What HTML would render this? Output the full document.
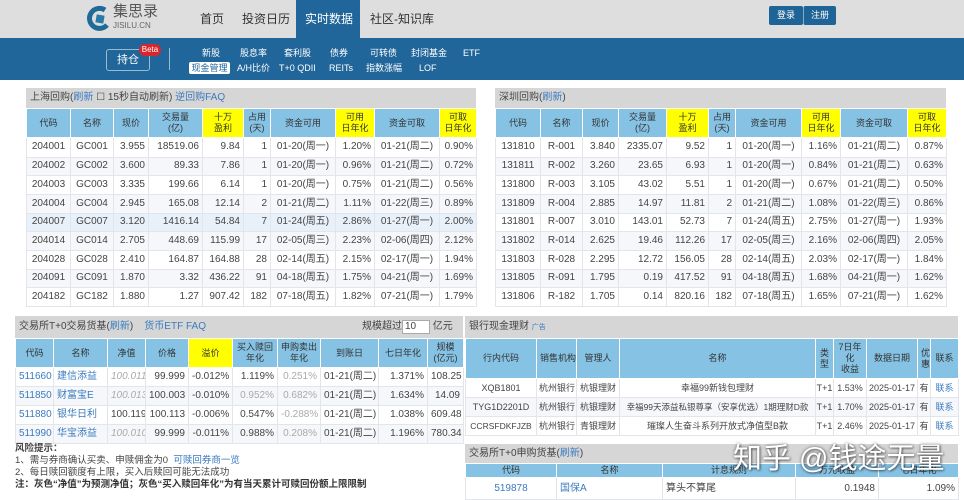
<!DOCTYPE html>
<html><head><meta charset="utf-8">
<style>
*{margin:0;padding:0;box-sizing:border-box}
body{width:964px;height:500px;overflow:hidden;background:#fff;font-family:"Liberation Sans","Noto Sans CJK SC",sans-serif;color:#333;position:relative}
.abs{position:absolute;white-space:nowrap}
table{border-collapse:collapse;table-layout:fixed;position:absolute}
td,th{border:1px solid #e2e6ea;font-size:10px;font-weight:normal;overflow:hidden;white-space:nowrap;padding:0 3px;line-height:12px;vertical-align:middle}
th{background:#86c2e4;color:#333;text-align:center;border-color:#fff;line-height:11px;font-size:9px}
th.y{background:#ffff00}
td{text-align:right;color:#444}
td.c{text-align:center}
td.l{text-align:left}
tr:nth-child(odd) td{background:#f6f7fa}
.hl td{background:#e8f1fa!important}
.title{background:#d6d6d6;font-size:10px;color:#444;padding-left:4px}
.lk{color:#3a7bbf}
.gr{color:#aaa;font-style:italic}
.g2{color:#aaa}
.nav{color:#fff;font-size:9px;line-height:11px}
.bk td{font-size:9px;padding:0 2px}
</style></head><body>
<div class="abs" style="left:0;top:0;width:964px;height:38px;background:#dedede"></div>
<div class="abs" style="left:0;top:38px;width:964px;height:42px;background:#20669a"></div>
<div class="abs" style="left:296px;top:0;width:64px;height:38px;background:#20669a"></div>
<svg class="abs" style="left:87px;top:5px" width="24" height="26" viewBox="0 0 24 26"><path d="M18 5 A10 10 0 1 0 20 20" fill="none" stroke="#1f6a96" stroke-width="5"/><rect x="9" y="10" width="8" height="8" fill="#2a7aa8" transform="rotate(10 13 14)"/></svg>
<div class="abs" style="left:113px;top:3px;font-size:15px;line-height:18px;color:#555">集思录</div>
<div class="abs" style="left:113px;top:21px;font-size:8px;line-height:9px;color:#666">JISILU.CN</div>
<div class="abs" style="left:200px;top:11px;font-size:12px;line-height:16px;color:#333">首页</div>
<div class="abs" style="left:242px;top:11px;font-size:12px;line-height:16px;color:#333">投资日历</div>
<div class="abs" style="left:305px;top:11px;font-size:12px;line-height:16px;color:#fff">实时数据</div>
<div class="abs" style="left:370px;top:11px;font-size:12px;line-height:16px;color:#333">社区-知识库</div>
<div class="abs" style="left:769px;top:6px;width:34px;height:19px;background:#1f6496;border-radius:2px;color:#fff;font-size:9px;text-align:center;line-height:19px">登录</div>
<div class="abs" style="left:803px;top:6px;width:33px;height:19px;background:#1f6496;border-left:1px solid #8ab;border-radius:2px;color:#fff;font-size:9px;text-align:center;line-height:19px">注册</div>
<div class="abs" style="left:106px;top:49px;width:44px;height:22px;border:1px solid #9bc;border-radius:3px;color:#fff;font-size:11px;text-align:center;line-height:20px">持仓</div>
<div class="abs" style="left:139px;top:44px;width:22px;height:12px;background:#d9262b;border-radius:6px;color:#fff;font-size:8px;text-align:center;line-height:12px">Beta</div>
<div class="abs" style="left:169px;top:48px;width:1px;height:22px;background:#9bc"></div>
<div class="abs nav" style="left:202px;top:48px">新股</div>
<div class="abs nav" style="left:240px;top:48px">股息率</div>
<div class="abs nav" style="left:284px;top:48px">套利股</div>
<div class="abs nav" style="left:330px;top:48px">债券</div>
<div class="abs nav" style="left:370px;top:48px">可转债</div>
<div class="abs nav" style="left:411px;top:48px">封闭基金</div>
<div class="abs nav" style="left:463px;top:48px">ETF</div>
<div class="abs" style="left:189px;top:62px;width:41px;height:12px;background:#fff;color:#20669a;font-size:9px;text-align:center;line-height:12px;border-radius:2px">现金管理</div>
<div class="abs nav" style="left:237px;top:63px">A/H比价</div>
<div class="abs nav" style="left:279px;top:63px">T+0 QDII</div>
<div class="abs nav" style="left:329px;top:63px">REITs</div>
<div class="abs nav" style="left:366px;top:63px">指数涨幅</div>
<div class="abs nav" style="left:419px;top:63px">LOF</div>

<div class="abs title" style="left:26px;top:88px;width:450px;height:20px;line-height:20px">上海回购(<span class="lk">刷新</span> ☐ 15秒自动刷新) <span class="lk">逆回购FAQ</span></div>
<table style="left:26px;top:108px;width:450px">
<colgroup><col style="width:44px"><col style="width:43px"><col style="width:35px"><col style="width:54px"><col style="width:41px"><col style="width:27px"><col style="width:65px"><col style="width:39px"><col style="width:65px"><col style="width:37px"></colgroup>
<tr style="height:29px"><th>代码</th><th>名称</th><th>现价</th><th>交易量<br>(亿)</th><th class="y">十万<br>盈利</th><th>占用<br>(天)</th><th>资金可用</th><th class="y">可用<br>日年化</th><th>资金可取</th><th class="y">可取<br>日年化</th></tr>
<tr style="height:19.5px"><td class="c">204001</td><td class="c">GC001</td><td>3.955</td><td>18519.06</td><td>9.84</td><td>1</td><td class="c">01-20(周一)</td><td>1.20%</td><td class="c">01-21(周二)</td><td>0.90%</td></tr>
<tr style="height:18.7px"><td class="c">204002</td><td class="c">GC002</td><td>3.600</td><td>89.33</td><td>7.86</td><td>1</td><td class="c">01-20(周一)</td><td>0.96%</td><td class="c">01-21(周二)</td><td>0.72%</td></tr>
<tr style="height:18.7px"><td class="c">204003</td><td class="c">GC003</td><td>3.335</td><td>199.66</td><td>6.14</td><td>1</td><td class="c">01-20(周一)</td><td>0.75%</td><td class="c">01-21(周二)</td><td>0.56%</td></tr>
<tr style="height:18.7px"><td class="c">204004</td><td class="c">GC004</td><td>2.945</td><td>165.08</td><td>12.14</td><td>2</td><td class="c">01-21(周二)</td><td>1.11%</td><td class="c">01-22(周三)</td><td>0.89%</td></tr>
<tr class="hl" style="height:18.7px"><td class="c">204007</td><td class="c">GC007</td><td>3.120</td><td>1416.14</td><td>54.84</td><td>7</td><td class="c">01-24(周五)</td><td>2.86%</td><td class="c">01-27(周一)</td><td>2.00%</td></tr>
<tr style="height:18.7px"><td class="c">204014</td><td class="c">GC014</td><td>2.705</td><td>448.69</td><td>115.99</td><td>17</td><td class="c">02-05(周三)</td><td>2.23%</td><td class="c">02-06(周四)</td><td>2.12%</td></tr>
<tr style="height:18.7px"><td class="c">204028</td><td class="c">GC028</td><td>2.410</td><td>164.87</td><td>164.88</td><td>28</td><td class="c">02-14(周五)</td><td>2.15%</td><td class="c">02-17(周一)</td><td>1.94%</td></tr>
<tr style="height:18.7px"><td class="c">204091</td><td class="c">GC091</td><td>1.870</td><td>3.32</td><td>436.22</td><td>91</td><td class="c">04-18(周五)</td><td>1.75%</td><td class="c">04-21(周一)</td><td>1.69%</td></tr>
<tr style="height:18.7px"><td class="c">204182</td><td class="c">GC182</td><td>1.880</td><td>1.27</td><td>907.42</td><td>182</td><td class="c">07-18(周五)</td><td>1.82%</td><td class="c">07-21(周一)</td><td>1.79%</td></tr>
</table>

<div class="abs title" style="left:495px;top:88px;width:451px;height:20px;line-height:20px">深圳回购(<span class="lk">刷新</span>)</div>
<table style="left:495px;top:108px;width:451px">
<colgroup><col style="width:45px"><col style="width:42px"><col style="width:36px"><col style="width:48px"><col style="width:42px"><col style="width:27px"><col style="width:66px"><col style="width:39px"><col style="width:67px"><col style="width:39px"></colgroup>
<tr style="height:29px"><th>代码</th><th>名称</th><th>现价</th><th>交易量<br>(亿)</th><th class="y">十万<br>盈利</th><th>占用<br>(天)</th><th>资金可用</th><th class="y">可用<br>日年化</th><th>资金可取</th><th class="y">可取<br>日年化</th></tr>
<tr style="height:19.5px"><td class="c">131810</td><td class="c">R-001</td><td>3.840</td><td>2335.07</td><td>9.52</td><td>1</td><td class="c">01-20(周一)</td><td>1.16%</td><td class="c">01-21(周二)</td><td>0.87%</td></tr>
<tr style="height:18.7px"><td class="c">131811</td><td class="c">R-002</td><td>3.260</td><td>23.65</td><td>6.93</td><td>1</td><td class="c">01-20(周一)</td><td>0.84%</td><td class="c">01-21(周二)</td><td>0.63%</td></tr>
<tr style="height:18.7px"><td class="c">131800</td><td class="c">R-003</td><td>3.105</td><td>43.02</td><td>5.51</td><td>1</td><td class="c">01-20(周一)</td><td>0.67%</td><td class="c">01-21(周二)</td><td>0.50%</td></tr>
<tr style="height:18.7px"><td class="c">131809</td><td class="c">R-004</td><td>2.885</td><td>14.97</td><td>11.81</td><td>2</td><td class="c">01-21(周二)</td><td>1.08%</td><td class="c">01-22(周三)</td><td>0.86%</td></tr>
<tr style="height:18.7px"><td class="c">131801</td><td class="c">R-007</td><td>3.010</td><td>143.01</td><td>52.73</td><td>7</td><td class="c">01-24(周五)</td><td>2.75%</td><td class="c">01-27(周一)</td><td>1.93%</td></tr>
<tr style="height:18.7px"><td class="c">131802</td><td class="c">R-014</td><td>2.625</td><td>19.46</td><td>112.26</td><td>17</td><td class="c">02-05(周三)</td><td>2.16%</td><td class="c">02-06(周四)</td><td>2.05%</td></tr>
<tr style="height:18.7px"><td class="c">131803</td><td class="c">R-028</td><td>2.295</td><td>12.72</td><td>156.05</td><td>28</td><td class="c">02-14(周五)</td><td>2.03%</td><td class="c">02-17(周一)</td><td>1.84%</td></tr>
<tr style="height:18.7px"><td class="c">131805</td><td class="c">R-091</td><td>1.795</td><td>0.19</td><td>417.52</td><td>91</td><td class="c">04-18(周五)</td><td>1.68%</td><td class="c">04-21(周一)</td><td>1.62%</td></tr>
<tr style="height:18.7px"><td class="c">131806</td><td class="c">R-182</td><td>1.705</td><td>0.14</td><td>820.16</td><td>182</td><td class="c">07-18(周五)</td><td>1.65%</td><td class="c">07-21(周一)</td><td>1.62%</td></tr>
</table>

<div class="abs title" style="left:15px;top:316px;width:448px;height:22px;line-height:22px">交易所T+0交易货基(<span class="lk">刷新</span>) &nbsp;&nbsp; <span class="lk">货币ETF FAQ</span></div>
<div class="abs" style="left:362px;top:320px;font-size:10px;line-height:14px;color:#444">规模超过<span style="display:inline-block;width:28px;height:14px;background:#fff;border:1px solid #aaa;padding-left:2px;line-height:12px;vertical-align:top">10</span> 亿元</div>
<table style="left:15px;top:338px;width:448px">
<colgroup><col style="width:38px"><col style="width:54px"><col style="width:38px"><col style="width:43px"><col style="width:44px"><col style="width:45px"><col style="width:43px"><col style="width:58px"><col style="width:49px"><col style="width:36px"></colgroup>
<tr style="height:29px"><th>代码</th><th>名称</th><th>净值</th><th>价格</th><th class="y">溢价</th><th>买入赎回<br>年化</th><th>申购卖出<br>年化</th><th>到账日</th><th>七日年化</th><th>规模<br>(亿元)</th></tr>
<tr style="height:19px"><td class="c lk">511660</td><td class="l lk">建信添益</td><td class="gr">100.011</td><td>99.999</td><td>-0.012%</td><td>1.119%</td><td class="g2">0.251%</td><td class="c">01-21(周二)</td><td>1.371%</td><td>108.25</td></tr>
<tr style="height:19px"><td class="c lk">511850</td><td class="l lk">财富宝E</td><td class="gr">100.013</td><td>100.003</td><td>-0.010%</td><td class="g2">0.952%</td><td class="g2">0.682%</td><td class="c">01-21(周二)</td><td>1.634%</td><td>14.09</td></tr>
<tr style="height:19px"><td class="c lk">511880</td><td class="l lk">银华日利</td><td>100.119</td><td>100.113</td><td>-0.006%</td><td>0.547%</td><td class="g2">-0.288%</td><td class="c">01-21(周二)</td><td>1.038%</td><td>609.48</td></tr>
<tr style="height:19px"><td class="c lk">511990</td><td class="l lk">华宝添益</td><td class="gr">100.010</td><td>99.999</td><td>-0.011%</td><td>0.988%</td><td class="g2">0.208%</td><td class="c">01-21(周二)</td><td>1.196%</td><td>780.34</td></tr>
</table>
<div class="abs" style="left:15px;top:443px;font-size:9.5px;line-height:12px;color:#444">
<b>风险提示：</b><br>1、需与券商确认买卖、申赎佣金为0 &nbsp;<span class="lk">可赎回券商一览</span><br>2、每日赎回额度有上限，买入后赎回可能无法成功<br><b style="color:#333">注：灰色“净值”为预测净值；灰色“买入赎回年化”为有当天累计可赎回份额上限限制</b></div>

<div class="abs title" style="left:465px;top:316px;width:493px;height:22px;line-height:22px">银行现金理财 <span style="font-size:7px;color:#3a7bbf">广告</span></div>
<table class="bk" style="left:465px;top:338px;width:493px">
<colgroup><col style="width:71px"><col style="width:40px"><col style="width:43px"><col style="width:196px"><col style="width:18px"><col style="width:33px"><col style="width:51px"><col style="width:13px"><col style="width:28px"></colgroup>
<tr style="height:40px"><th>行内代码</th><th>销售机构</th><th>管理人</th><th>名称</th><th>类<br>型</th><th>7日年<br>化<br>收益</th><th>数据日期</th><th>优<br>惠</th><th>联系</th></tr>
<tr style="height:19px"><td class="c">XQB1801</td><td class="c">杭州银行</td><td class="c">杭银理财</td><td class="c">幸福99新钱包理财</td><td class="c" style="padding:0">T+1</td><td class="c">1.53%</td><td class="c" style="padding:0">2025-01-17</td><td class="c" style="padding:0">有</td><td class="c lk">联系</td></tr>
<tr style="height:19px"><td class="c">TYG1D2201D</td><td class="c">杭州银行</td><td class="c">杭银理财</td><td class="c" style="font-size:8.5px;padding:0">幸福99天添益私银尊享（安享优选）1期理财D款</td><td class="c" style="padding:0">T+1</td><td class="c">1.70%</td><td class="c" style="padding:0">2025-01-17</td><td class="c" style="padding:0">有</td><td class="c lk">联系</td></tr>
<tr style="height:19px"><td class="c" style="font-size:8.5px;padding:0">CCRSFDKFJZB</td><td class="c">杭州银行</td><td class="c">青银理财</td><td class="c">璀璨人生奋斗系列开放式净值型B款</td><td class="c" style="padding:0">T+1</td><td class="c">2.46%</td><td class="c" style="padding:0">2025-01-17</td><td class="c" style="padding:0">有</td><td class="c lk">联系</td></tr>
</table>

<div class="abs title" style="left:465px;top:444px;width:493px;height:19px;line-height:19px">交易所T+0申购货基(<span class="lk">刷新</span>)</div>
<table style="left:465px;top:463px;width:493px">
<colgroup><col style="width:91px"><col style="width:106px"><col style="width:133px"><col style="width:83px"><col style="width:80px"></colgroup>
<tr style="height:14px"><th>代码</th><th>名称</th><th>计息规则</th><th>万元收益</th><th>七日年化</th></tr>
<tr style="height:22px"><td class="c lk">519878</td><td class="l lk">国保A</td><td class="l">算头不算尾</td><td>0.1948</td><td>1.09%</td></tr>
</table>
<div class="abs" style="left:733px;top:442px;font-size:29px;line-height:34px;color:#fff;text-shadow:0 0 3px rgba(0,0,0,.55),1px 1px 2px rgba(0,0,0,.4)">知乎 @钱途无量</div>
</body></html>
